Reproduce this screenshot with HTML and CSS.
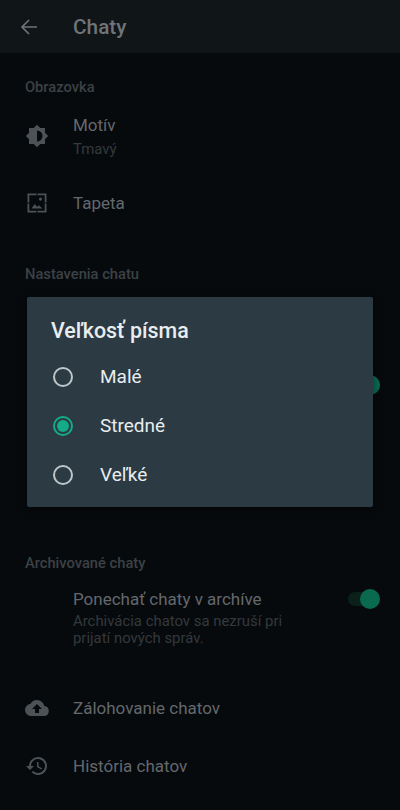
FILE: index.html
```html
<!DOCTYPE html>
<html lang="sk">
<head>
<meta charset="utf-8">
<title>Chaty</title>
<link rel="stylesheet" href="styles.css">
</head>
<body>
<div class="screen">
  <header class="appbar">
    <svg class="back" viewBox="0 0 24 24"><path d="M20 12H5.500M12 5l-7 7 7 7"/></svg>
    <h1 class="appbar-title">Chaty</h1>
  </header>

  <section class="section sec-display">
    <h2 class="section-title">Obrazovka</h2>
    <div class="row row-theme">
      <span class="icon"><svg viewBox="0 0 24 24"><path fill-rule="evenodd" d="M12 .8l3.300 3.300H20v4.600l3.200 3.300-3.200 3.300v4.600h-4.700L12 23.200l-3.300-3.300H4v-4.600L.8 12 4 8.700V4.100h4.700L12 .8zM12 6.500v11a5.500 5.500 0 0 0 0-11z"/></svg></span>
      <div class="row-text"><div class="label">Motív</div><div class="sub">Tmavý</div></div>
    </div>
    <div class="row row-wall">
      <span class="icon"><svg viewBox="0 0 24 24"><path d="M2.500 2.500h9v1.800H4.300v7.200H2.500v-9zm10 0h9v9h-1.800V4.300h-7.200V2.500zM2.500 12.500h1.800v7.200h7.200v1.800h-9v-9zm17.200 0h1.800v9h-9v-1.800h7.200v-7.200zM15.500 6.500a1.600 1.600 0 1 1 0 3.200 1.600 1.600 0 0 1 0-3.200zM6.500 17.500l3.200-4.500 2.500 3 1.600-1.800 3.700 3.300h-11z"/></svg></span>
      <div class="row-text"><div class="label">Tapeta</div></div>
    </div>
  </section>

  <section class="section sec-chat">
    <h2 class="section-title">Nastavenia chatu</h2>
    <div class="row-hidden"><span class="switch"></span></div>
  </section>

  <section class="section sec-archive">
    <h2 class="section-title">Archivované chaty</h2>
    <div class="row row-archive">
      <span class="icon"></span>
      <div class="row-text">
        <div class="label">Ponechať chaty v archíve</div>
        <div class="desc">Archivácia chatov sa nezruší pri<br>prijatí nových správ.</div>
      </div>
      <span class="switch"></span>
    </div>
    <div class="row row-backup">
      <span class="icon"><svg viewBox="0 0 24 24"><path d="M19.350 10.040A7.490 7.490 0 0 0 12 4a7.500 7.500 0 0 0-6.650 4.040A5.990 5.990 0 0 0 0 14a6 6 0 0 0 6 6h13a5 5 0 0 0 .35-9.960zM14 13v4h-4v-4H7l5-5 5 5h-3z"/></svg></span>
      <div class="row-text"><div class="label">Zálohovanie chatov</div></div>
    </div>
    <div class="row row-history">
      <span class="icon"><svg viewBox="0 0 24 24"><path d="M13 3a9 9 0 0 0-9 9H1l3.890 3.890.07.140L9 12H6a7 7 0 1 1 2.050 4.950l-1.420 1.420A9 9 0 1 0 13 3zm-1 5v5l4.280 2.540.72-1.210-3.500-2.080V8H12z"/></svg></span>
      <div class="row-text"><div class="label">História chatov</div></div>
    </div>
  </section>

  <div class="dialog">
    <h2 class="dialog-title">Veľkosť písma</h2>
    <div class="option"><span class="radio"></span><span class="option-label">Malé</span></div>
    <div class="option"><span class="radio radio-on"></span><span class="option-label">Stredné</span></div>
    <div class="option"><span class="radio"></span><span class="option-label">Veľké</span></div>
  </div>
</div>
</body>
</html>
```

FILE: styles.css
```css
* { box-sizing: border-box; }
html, body { margin: 0; padding: 0; }
body { background: #070a0d; font-family: Roboto, "Liberation Sans", sans-serif; }
.screen { position: relative; width: 400px; height: 810px; overflow: hidden; background: #070a0d; }

.appbar { height: 53px; background: #101518; display: flex; align-items: center; padding-left: 17px; }
.back { width: 24px; height: 24px; fill: none; stroke: #6d7377; stroke-width: 1.700; }
.appbar-title { margin: 0 0 0 32px; font-size: 20.800px; font-weight: 500; color: #6f7478; }

.section-title { margin: 0; height: 20px; line-height: 20px; padding-left: 25px; font-size: 14.700px; font-weight: 500; color: #3b4145; }
.sec-display { padding-top: 24px; }
.sec-chat { padding-top: 49px; }
.sec-archive { padding-top: 18px; }

.row { display: flex; padding-left: 25px; }
.row-text { flex: 1; }
.icon { width: 24px; height: 24px; margin-right: 24px; flex: none; }
.icon svg { display: block; width: 24px; height: 24px; fill: #4c5256; }

.label { font-size: 17px; line-height: 24px; color: #63686c; }
.sub { font-size: 15px; line-height: 20px; margin-top: 2px; color: #33393c; }
.desc { font-size: 14.900px; line-height: 17px; margin-top: 2px; color: #33393c; }

.row-theme { padding-top: 16px; align-items: center; }
.row-wall { padding-top: 32px; align-items: center; }
.row-hidden { height: 251px; display: flex; justify-content: flex-end; padding: 89px 20px 0 0; }
.row-archive { padding: 14px 20px 0 25px; }
.row-backup { padding-top: 49px; align-items: center; }
.row-history { padding-top: 34px; align-items: center; }

.switch { position: relative; display: block; width: 32px; height: 14px; margin-top: 5px; border-radius: 7px; background: #0a2019; flex: none; margin-left: auto; }
.switch::after { content: ""; position: absolute; right: 0; top: -3px; width: 20px; height: 20px; border-radius: 50%; background: #0a6a50; }

.dialog { position: absolute; left: 27px; top: 297px; width: 346px; height: 210px; padding: 20px 24px 0; background: #2b3a43; border-radius: 2px; box-shadow: 0 2px 8px rgba(0,0,0,.5); }
.dialog-title { margin: 0 0 7px; font-size: 21.400px; line-height: 28px; font-weight: 500; color: #e9edef; }
.option { display: flex; align-items: center; height: 49px; }
.radio { width: 20px; height: 20px; margin: 0 2px; border: 2px solid #bfc6ca; border-radius: 50%; flex: none; }
.radio-on { border-color: #14ab89; display: flex; align-items: center; justify-content: center; }
.radio-on::after { content: ""; width: 12px; height: 12px; border-radius: 50%; background: #14ab89; }
.option-label { margin-left: 25px; font-size: 19px; color: #e9edef; }
```
